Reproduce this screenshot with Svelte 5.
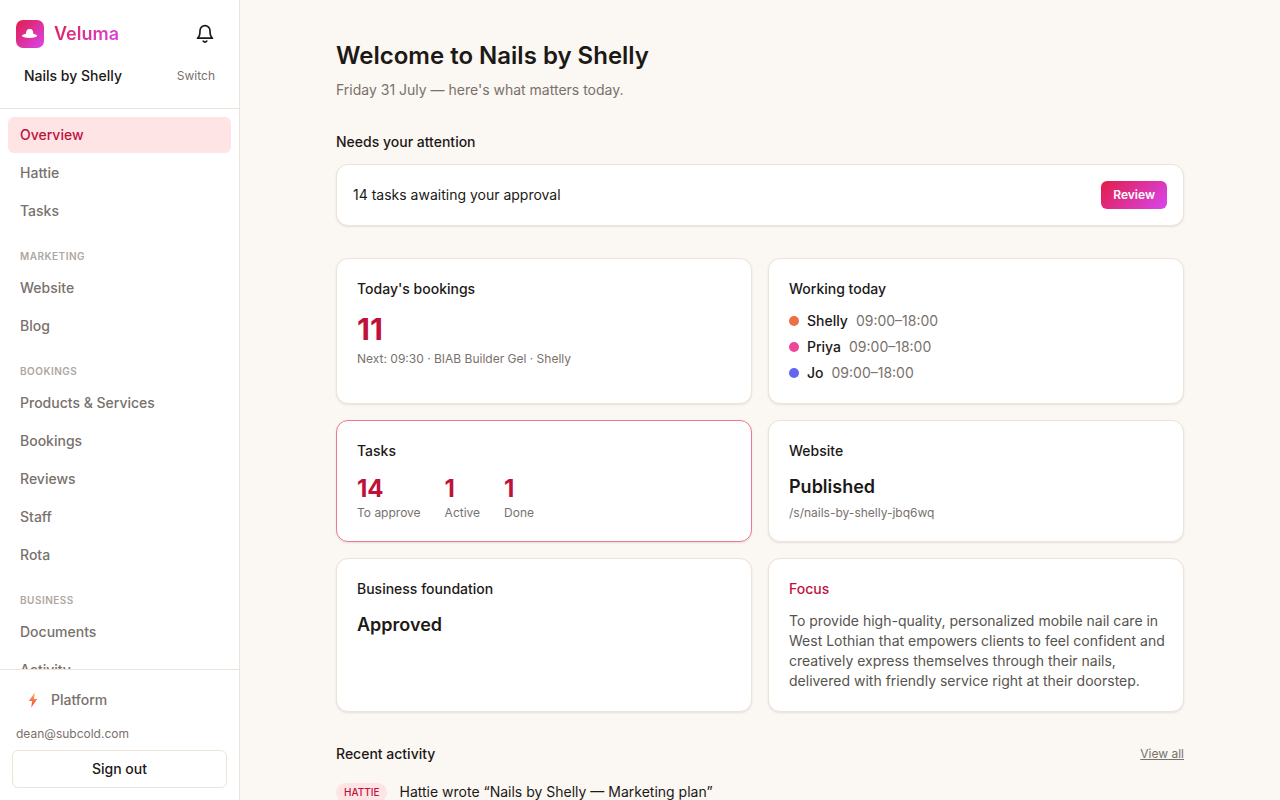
<script>
  const navGroups = [
    { title: '', items: ['Overview', 'Hattie', 'Tasks'] },
    { title: 'Marketing', items: ['Website', 'Blog'] },
    { title: 'Bookings', items: ['Products & Services', 'Bookings', 'Reviews', 'Staff', 'Rota'] },
    { title: 'Business', items: ['Documents', 'Activity'] }
  ];

  const staff = [
    { name: 'Shelly', hours: '09:00–18:00', color: '#ed6f45' },
    { name: 'Priya', hours: '09:00–18:00', color: '#ec4899' },
    { name: 'Jo', hours: '09:00–18:00', color: '#6366f1' }
  ];

  const taskCounts = [
    { label: 'To approve', count: 14 },
    { label: 'Active', count: 1 },
    { label: 'Done', count: 1 }
  ];

  const activity = [
    { who: 'Hattie', text: 'Hattie wrote “Nails by Shelly — Marketing plan”' }
  ];

  let current = $state('Overview');
</script>

<div class="shell">
  <aside class="sidebar">
    <div class="brand-area">
      <div class="brand-row">
        <a class="brand" href="#home">
          <svg width="28" height="28" viewBox="0 0 28 28" aria-hidden="true">
            <defs>
              <linearGradient id="logo" x1="0" y1="0" x2="1" y2="1">
                <stop offset="0" stop-color="#e11d48" />
                <stop offset="1" stop-color="#d946ef" />
              </linearGradient>
            </defs>
            <rect width="28" height="28" rx="7" fill="url(#logo)" />
            <ellipse cx="13.500" cy="15.700" rx="7.700" ry="2.200" fill="#fff" />
            <path fill="#fff" d="M9.600 15.500c.3-1.200.2-2.600.7-4 .5-1.600 1.500-2.500 2.500-2.500.4 0 .5.2.9.2s.6-.2 1-.2c1 0 1.900.9 2.300 2.500.4 1.400.3 2.800.6 4z" />
          </svg>
          <span class="brand-name">Veluma</span>
        </a>
        <button class="bell" aria-label="Notifications">
          <svg width="20" height="20" viewBox="0 0 24 24" fill="none" stroke="currentColor" stroke-width="2" stroke-linejoin="round">
            <path d="M6 8a6 6 0 0 1 12 0c0 7 3 9 3 9H3s3-2 3-9z" />
            <path d="M9.800 20.500q2.200 2.600 4.400 0" stroke-linecap="round" />
          </svg>
        </button>
      </div>
      <button class="business">
        <span>Nails by Shelly</span>
        <span class="switch">Switch</span>
      </button>
    </div>

    <nav>
      {#each navGroups as group}
        {#if group.title}
          <h2 class="nav-title">{group.title}</h2>
        {/if}
        <div class="nav-items">
          {#each group.items as item}
            <a
              href="#{item.toLowerCase()}"
              class="nav-link"
              class:active={item === current}
              onclick={() => (current = item)}>{item}</a>
          {/each}
        </div>
      {/each}
    </nav>

    <div class="account">
      <a class="platform" href="#platform">
        <svg width="18" height="18" viewBox="0 0 18 18" aria-hidden="true">
          <defs>
            <linearGradient id="bolt" x1="0" y1="0" x2="0" y2="1">
              <stop offset="0" stop-color="#fdb44b" />
              <stop offset="1" stop-color="#f0433f" />
            </linearGradient>
          </defs>
          <path fill="url(#bolt)" d="M10.800 1.500 4.800 10h3.400L7.200 16.500 13.300 8H9.900z" />
        </svg>
        Platform
      </a>
      <p class="email">dean@subcold.com</p>
      <button class="sign-out">Sign out</button>
    </div>
  </aside>

  <main>
    <div class="content">
      <h1>Welcome to Nails by Shelly</h1>
      <p class="subtitle">Friday 31 July — here's what matters today.</p>

      <section class="attention">
        <h2>Needs your attention</h2>
        <div class="card notice">
          <span>14 tasks awaiting your approval</span>
          <button class="review">Review</button>
        </div>
      </section>

      <div class="grid">
        <section class="card">
          <h2>Today's bookings</h2>
          <p class="big">11</p>
          <p class="small">Next: 09:30 · BIAB Builder Gel · Shelly</p>
        </section>

        <section class="card">
          <h2>Working today</h2>
          <ul class="staff">
            {#each staff as person}
              <li>
                <span class="dot" style="background: {person.color}"></span>
                <span class="name">{person.name}</span>
                <span class="hours">{person.hours}</span>
              </li>
            {/each}
          </ul>
        </section>

        <section class="card highlight">
          <h2>Tasks</h2>
          <div class="counts">
            {#each taskCounts as { label, count }}
              <div>
                <p class="count">{count}</p>
                <p class="label">{label}</p>
              </div>
            {/each}
          </div>
        </section>

        <section class="card">
          <h2>Website</h2>
          <p class="status">Published</p>
          <p class="small">/s/nails-by-shelly-jbq6wq</p>
        </section>

        <section class="card">
          <h2>Business foundation</h2>
          <p class="status">Approved</p>
        </section>

        <section class="card focus-card">
          <h2>Focus</h2>
          <p class="focus">
            To provide high-quality, personalized mobile nail care in West Lothian that empowers clients to feel confident and creatively express themselves through their nails, delivered with friendly service right at their doorstep.
          </p>
        </section>
      </div>

      <section class="recent">
        <div class="recent-head">
          <h2>Recent activity</h2>
          <a href="#activity">View all</a>
        </div>
        <ul>
          {#each activity as entry}
            <li>
              <span class="tag">{entry.who}</span>
              <span>{entry.text}</span>
            </li>
          {/each}
        </ul>
      </section>
    </div>
  </main>
</div>

<style>
  :global(body) {
    margin: 0;
  }

  .shell {
    display: flex;
    height: 100vh;
    background: #fbf7f2;
    color: #1c1917;
    font-family: Inter, "Liberation Sans", sans-serif;
    font-size: 14px;
    line-height: 20px;
  }

  h1, h2, p, ul {
    margin: 0;
    padding: 0;
  }

  ul {
    list-style: none;
  }

  h2 {
    font-size: 14px;
    font-weight: 500;
  }

  a {
    color: inherit;
    text-decoration: none;
  }

  button {
    border: 0;
    background: none;
    color: inherit;
    font: inherit;
    cursor: pointer;
  }

  .sidebar {
    display: flex;
    flex-direction: column;
    flex: none;
    box-sizing: border-box;
    width: 240px;
    border-right: 1px solid #ede3d8;
    background: #fff;
  }

  .brand-area {
    padding: 16px 16px 14px;
    border-bottom: 1px solid #ede3d8;
  }

  .brand-row {
    display: flex;
    align-items: center;
    justify-content: space-between;
    height: 36px;
  }

  .brand {
    display: flex;
    align-items: center;
    gap: 10px;
  }

  .brand-name {
    background: linear-gradient(135deg, #e11d48, #d946ef);
    background-clip: text;
    color: transparent;
    font-size: 18px;
    font-weight: 600;
    line-height: 28px;
  }

  .bell {
    display: flex;
    padding: 8px;
  }

  .business {
    display: flex;
    align-items: center;
    justify-content: space-between;
    width: 100%;
    margin-top: 6px;
    padding: 8px;
    font-weight: 500;
  }

  .switch {
    color: #78716c;
    font-size: 12px;
    font-weight: 400;
  }

  nav {
    flex: 1;
    min-height: 0;
    overflow-y: auto;
    padding: 8px;
    scrollbar-width: none;
  }

  .nav-items {
    display: flex;
    flex-direction: column;
    gap: 2px;
  }

  .nav-title {
    padding: 20px 12px 6px;
    color: #aea7a1;
    font-size: 10px;
    font-weight: 600;
    line-height: 15px;
    letter-spacing: 0.05em;
    text-transform: uppercase;
  }

  .nav-link {
    padding: 8px 12px;
    border-radius: 6px;
    color: #78716c;
    font-weight: 500;
  }

  .nav-link.active {
    background: #ffe4e6;
    color: #be123c;
  }

  .account {
    padding: 12px;
    border-top: 1px solid #ede3d8;
  }

  .platform {
    display: flex;
    align-items: center;
    gap: 9px;
    padding: 8px 12px;
    color: #78716c;
    font-weight: 500;
  }

  .email {
    margin: 8px 4px;
    color: #78716c;
    font-size: 12px;
    line-height: 16px;
  }

  .sign-out {
    width: 100%;
    padding: 8px;
    border: 1px solid #ede3d8;
    border-radius: 6px;
    font-weight: 500;
  }

  main {
    flex: 1;
    min-width: 0;
    overflow-y: auto;
    scrollbar-width: none;
  }

  .content {
    box-sizing: border-box;
    max-width: 896px;
    margin: 0 auto;
    padding: 40px 24px;
  }

  h1 {
    font-size: 24px;
    font-weight: 600;
    line-height: 32px;
  }

  .subtitle {
    margin-top: 8px;
    color: #78716c;
  }

  .attention {
    margin-top: 32px;
  }

  .card {
    padding: 20px;
    border: 1px solid #ede3d8;
    border-radius: 12px;
    background: #fff;
    box-shadow: 0 1px 2px rgba(28, 25, 23, 0.1);
  }

  .highlight {
    border-color: #ed7790;
  }

  .notice {
    display: flex;
    align-items: center;
    justify-content: space-between;
    margin-top: 12px;
    padding: 16px;
  }

  .review {
    padding: 6px 12px;
    border-radius: 6px;
    background: linear-gradient(135deg, #e11d48, #d946ef);
    color: #fff;
    font-size: 12px;
    font-weight: 600;
    line-height: 16px;
  }

  .grid {
    display: grid;
    grid-template-columns: 1fr 1fr;
    gap: 16px;
    margin-top: 32px;
  }

  .big {
    margin-top: 12px;
    color: #be123c;
    font-size: 30px;
    font-weight: 700;
    line-height: 36px;
  }

  .small {
    margin-top: 4px;
    color: #78716c;
    font-size: 12px;
    line-height: 16px;
  }

  .staff {
    display: flex;
    flex-direction: column;
    gap: 6px;
    margin-top: 12px;
  }

  .staff li {
    display: flex;
    align-items: center;
    gap: 8px;
  }

  .dot {
    width: 10px;
    height: 10px;
    border-radius: 50%;
  }

  .name {
    font-weight: 500;
  }

  .hours {
    color: #78716c;
  }

  .counts {
    display: flex;
    gap: 24px;
    margin-top: 12px;
  }

  .count {
    color: #be123c;
    font-size: 24px;
    font-weight: 700;
    line-height: 32px;
  }

  .label {
    color: #78716c;
    font-size: 12px;
    line-height: 16px;
  }

  .status {
    margin-top: 12px;
    font-size: 18px;
    font-weight: 600;
    line-height: 28px;
  }

  .focus-card {
    padding-right: 12px;
  }

  .focus-card h2 {
    color: #be123c;
  }

  .focus {
    margin-top: 12px;
    color: #57534e;
  }

  .recent {
    margin-top: 32px;
  }

  .recent-head {
    display: flex;
    align-items: center;
    justify-content: space-between;
  }

  .recent-head a {
    color: #78716c;
    font-size: 12px;
    text-decoration: underline;
  }

  .recent ul {
    margin-top: 18px;
  }

  .recent li {
    display: flex;
    align-items: center;
    gap: 12px;
  }

  .tag {
    padding: 2px 8px;
    border-radius: 12px;
    background: #ffe4e6;
    color: #be123c;
    font-size: 10px;
    font-weight: 500;
    line-height: 15px;
    text-transform: uppercase;
  }
</style>
